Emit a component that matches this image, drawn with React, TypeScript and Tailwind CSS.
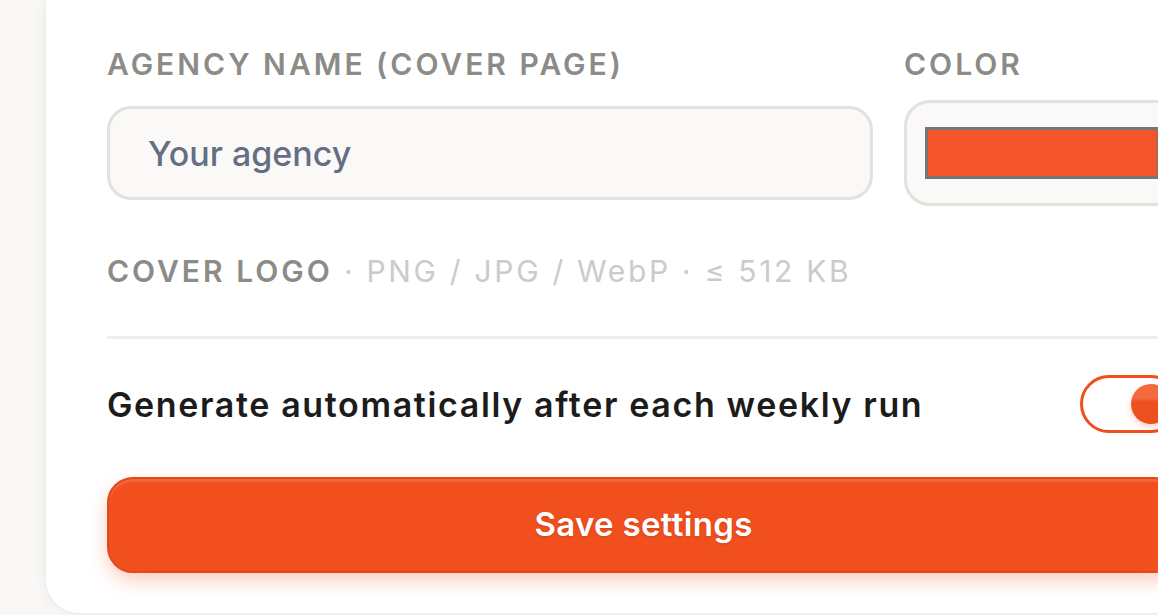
import {useState} from "react";

const Label = ({children}: {children: React.ReactNode}) => (
    <p className="text-[30px] leading-[36px] font-semibold tracking-[0.1em] uppercase text-[#8c8b88]">{children}</p>
);

export default function App() {
    const [auto, setAuto] = useState(true);

    return (
        <div className="h-[615px] overflow-hidden bg-[#f9f8f6] pl-[45px] font-['Inter',sans-serif]">
            <div className="w-[1196px] bg-white rounded-bl-[34px] border-l border-b border-[#eeece9] shadow-[0_0_14px_rgba(0,0,0,0.06)] px-[61px] pt-[46px] pb-[40px]">
                <div className="grid grid-cols-[766px_277px] gap-x-[31px]">
                    <div className="flex flex-col">
                        <Label>Agency name (cover page)</Label>
                        <div className="mt-[24px] h-[94px] rounded-[24px] border-[3px] border-[#e3e1de] bg-[#faf9f7] pl-[38px] flex items-center">
                            <span className="text-[34px] font-medium text-[#656e82]">Your agency</span>
                        </div>
                    </div>
                    <div className="flex flex-col">
                        <Label>Color</Label>
                        <div className="mt-[18px] h-[106px] rounded-[26px] border-[3px] border-[#e3e1de] bg-[#faf9f7] px-[18px] py-[24px]">
                            <div className="h-full border-[3px] border-[#767676] bg-[#f4552a]"/>
                        </div>
                    </div>
                </div>

                <p className="mt-[47px] text-[30px] leading-[36px] tracking-[0.09em] text-[#cbcbcb]">
                    <span className="font-semibold tracking-[0.1em] text-[#8c8b88]">COVER LOGO</span> · PNG / JPG / WebP · ≤ 512 KB
                </p>

                <div className="mt-[47px] h-[3px] bg-[#eeeeee]"/>

                <div className="mt-[36px] flex items-center justify-between">
                    <span className="text-[34px] font-semibold tracking-[0.048em] text-[#1c1c1c]">Generate automatically after each weekly run</span>
                    <button
                        onClick={() => setAuto(!auto)}
                        className="w-[100px] h-[58px] rounded-full border-[3px] border-[#f04e1d] bg-white flex items-center justify-end pr-[6px]"
                    >
                        <span className="w-[40px] h-[40px] rounded-full bg-[linear-gradient(180deg,#f5693e_0%,#f5693e_35%,#ef501f_45%,#ee4f1e_100%)] shadow-[0_3px_6px_rgba(240,78,29,0.25)]"/>
                    </button>
                </div>

                <button className="mt-[44px] w-full h-[96px] rounded-[26px] bg-[#f24f1f] border-2 border-[#e2491a] shadow-[inset_0_3px_0_rgba(255,255,255,0.12),0_8px_18px_rgba(242,79,31,0.28)] text-white text-[33px] font-semibold tracking-[0.01em] [text-shadow:0_1px_3px_rgba(0,0,0,0.15)]">
                    Save settings
                </button>
            </div>
        </div>
    );
}
